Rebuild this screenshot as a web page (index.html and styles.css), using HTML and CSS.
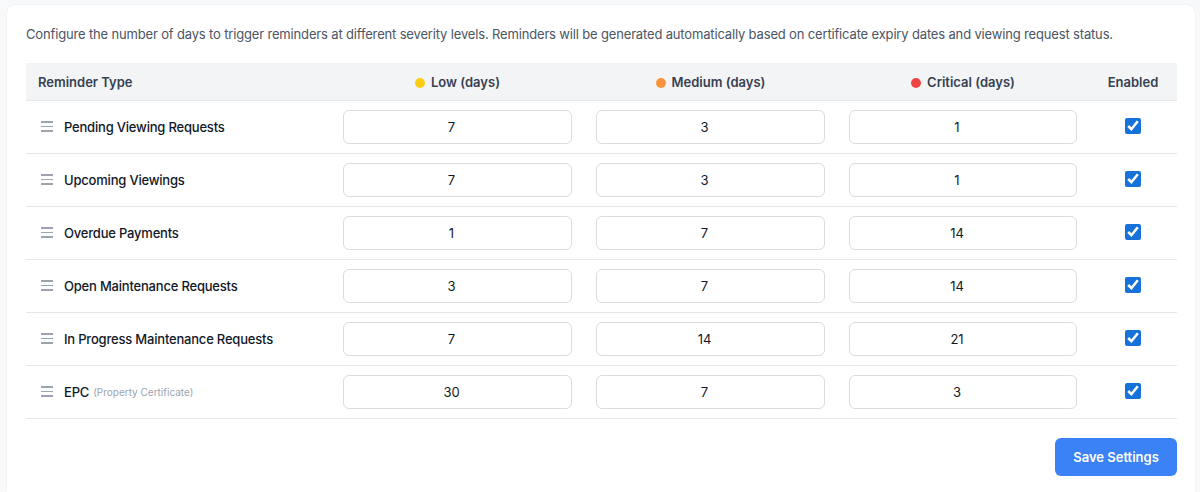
FILE: index.html
```html
<!DOCTYPE html>
<html lang="en">
<head>
    <meta charset="UTF-8">
    <title>Reminder Settings</title>
    <link rel="stylesheet" href="styles.css">
</head>
<body>
    <div class="card">
        <p class="intro">Configure the number of days to trigger reminders at different severity levels. Reminders will be generated automatically based on certificate expiry dates and viewing request status.</p>
        <table class="reminders">
            <thead>
                <tr>
                    <th class="col-type">Reminder Type</th>
                    <th class="col-days wide"><span class="dot low"></span>Low (days)</th>
                    <th class="col-days wide"><span class="dot medium"></span>Medium (days)</th>
                    <th class="col-days"><span class="dot critical"></span>Critical (days)</th>
                    <th class="col-enabled">Enabled</th>
                </tr>
            </thead>
            <tbody>
                <tr>
                    <td><div class="type"><span class="handle"><i></i><i></i><i></i></span>Pending Viewing Requests</div></td>
                    <td><input type="number" value="7"></td>
                    <td><input type="number" value="3"></td>
                    <td><input type="number" value="1"></td>
                    <td class="col-enabled"><input type="checkbox" checked></td>
                </tr>
                <tr>
                    <td><div class="type"><span class="handle"><i></i><i></i><i></i></span>Upcoming Viewings</div></td>
                    <td><input type="number" value="7"></td>
                    <td><input type="number" value="3"></td>
                    <td><input type="number" value="1"></td>
                    <td class="col-enabled"><input type="checkbox" checked></td>
                </tr>
                <tr>
                    <td><div class="type"><span class="handle"><i></i><i></i><i></i></span>Overdue Payments</div></td>
                    <td><input type="number" value="1"></td>
                    <td><input type="number" value="7"></td>
                    <td><input type="number" value="14"></td>
                    <td class="col-enabled"><input type="checkbox" checked></td>
                </tr>
                <tr>
                    <td><div class="type"><span class="handle"><i></i><i></i><i></i></span>Open Maintenance Requests</div></td>
                    <td><input type="number" value="3"></td>
                    <td><input type="number" value="7"></td>
                    <td><input type="number" value="14"></td>
                    <td class="col-enabled"><input type="checkbox" checked></td>
                </tr>
                <tr>
                    <td><div class="type"><span class="handle"><i></i><i></i><i></i></span>In Progress Maintenance Requests</div></td>
                    <td><input type="number" value="7"></td>
                    <td><input type="number" value="14"></td>
                    <td><input type="number" value="21"></td>
                    <td class="col-enabled"><input type="checkbox" checked></td>
                </tr>
                <tr>
                    <td><div class="type"><span class="handle"><i></i><i></i><i></i></span>EPC <small>(Property Certificate)</small></div></td>
                    <td><input type="number" value="30"></td>
                    <td><input type="number" value="7"></td>
                    <td><input type="number" value="3"></td>
                    <td class="col-enabled"><input type="checkbox" checked></td>
                </tr>
            </tbody>
        </table>
        <div class="actions">
            <button class="save">Save Settings</button>
        </div>
    </div>
</body>
</html>
```

FILE: styles.css
```css
body { margin: 0; background: #f8f9fa; font-family: Inter, "Noto Sans", sans-serif; color: #111827; }
.card { margin: 5px 5px 0 7px; background: white; border-radius: 8px 8px 0 0; box-shadow: 0 0 2px rgba(0, 0, 0, 0.08); padding: 19px 18px 0 19px; height: 487px; box-sizing: border-box; }
.intro { margin: 0 0 19px; font-size: 13px; line-height: 20px; color: #4b5563; letter-spacing: -0.16px; }
.reminders { width: 100%; border-collapse: collapse; table-layout: fixed; }
.reminders th { background: #f3f4f6; font-size: 13px; font-weight: 600; color: #374151; padding: 11px 12px 9px; line-height: 16px; height: 37px; box-sizing: border-box; border-bottom: 1px solid #e5e7eb; }
.col-type { width: 305px; text-align: left; }
.col-days { width: 252px; text-align: center; }
.col-days.wide { width: 253px; }
.col-enabled { text-align: center; }
.dot { display: inline-block; width: 10px; height: 10px; border-radius: 50%; margin-right: 6px; vertical-align: -1px; }
.dot.low { background: #facc15; }
.dot.medium { background: #fb923c; }
.dot.critical { background: #ef4444; }
.reminders td { padding: 9px 12px; height: 53px; box-sizing: border-box; border-bottom: 1px solid #e5e7eb; }
.type { display: flex; align-items: center; font-size: 13px; font-weight: 500; color: #111827; letter-spacing: -0.2px; }
.type small { font-size: 10px; font-weight: 400; color: #9ca3af; margin-left: 4px; letter-spacing: 0; }
.handle { display: flex; flex-direction: column; gap: 3px; width: 12px; margin: 0 11px 0 3px; }
.handle i { display: block; height: 1.5px; background: #9ca3af; }
.reminders input[type="number"] { width: 100%; height: 34px; box-sizing: border-box; padding: 0 14px 0 2px; border: 1px solid #d9dce1; border-radius: 6px; text-align: center; font-family: inherit; font-size: 13px; color: #111827; -moz-appearance: textfield; }
.reminders input[type="number"]::-webkit-inner-spin-button { -webkit-appearance: none; margin: 0; }
.reminders input[type="checkbox"] { width: 16px; height: 16px; margin: 0 0 3px; vertical-align: middle; accent-color: #1672d8; }
.actions { display: flex; justify-content: flex-end; margin-top: 19px; }
.save { background: #3b82f6; color: white; border: none; border-radius: 6px; font-family: inherit; font-size: 13px; font-weight: 600; width: 122px; height: 38px; }
```
